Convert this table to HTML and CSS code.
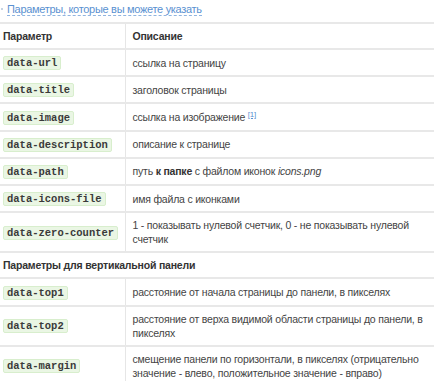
FILE: index.html
```html
<!DOCTYPE html>
<html lang="ru">
<head>
    <meta charset="UTF-8">
    <meta name="viewport" content="width=device-width, initial-scale=1.0">
    <title>Параметры</title>
    <link rel="stylesheet" href="styles.css">
</head>
<body>
    <div class="caption">
        <span class="mark"></span>
        <a href="#params">Параметры, которые вы можете указать</a>
    </div>

    <table class="params" id="params">
        <colgroup>
            <col class="col-name">
            <col>
        </colgroup>
        <tr class="head">
            <td>Параметр</td>
            <td>Описание</td>
        </tr>
        <tr>
            <td><code>data-url</code></td>
            <td>ссылка на страницу</td>
        </tr>
        <tr>
            <td><code>data-title</code></td>
            <td>заголовок страницы</td>
        </tr>
        <tr>
            <td><code>data-image</code></td>
            <td>ссылка на изображение <sup><a href="#note1">[1]</a></sup></td>
        </tr>
        <tr>
            <td><code>data-description</code></td>
            <td>описание к странице</td>
        </tr>
        <tr>
            <td><code>data-path</code></td>
            <td>путь <b>к папке</b> с файлом иконок <i>icons.png</i></td>
        </tr>
        <tr>
            <td><code>data-icons-file</code></td>
            <td>имя файла с иконками</td>
        </tr>
        <tr>
            <td><code>data-zero-counter</code></td>
            <td>1 - показывать нулевой счетчик, 0 - не показывать нулевой счетчик</td>
        </tr>
        <tr class="section">
            <td colspan="2">Параметры для вертикальной панели</td>
        </tr>
        <tr>
            <td><code>data-top1</code></td>
            <td>расстояние от начала страницы до панели, в пикселях</td>
        </tr>
        <tr>
            <td><code>data-top2</code></td>
            <td>расстояние от верха видимой области страницы до панели, в пикселях</td>
        </tr>
        <tr>
            <td><code>data-margin</code></td>
            <td>смещение панели по горизонтали, в пикселях (отрицательно значение - влево, положительное значение - вправо)</td>
        </tr>
    </table>
</body>
</html>
```

FILE: styles.css
```css
body {
    margin: 0;
    font-family: Arial, "Liberation Sans", sans-serif;
    font-size: 10.5px;
    letter-spacing: -0.2px;
    color: #444;
    background: #fff;
}
.caption {
    height: 22px;
    padding-left: 7px;
    line-height: 18px;
    position: relative;
}
.caption a {
    color: #5a91d1;
    font-size: 11px;
    letter-spacing: -0.3px;
    text-decoration: none;
    border-bottom: 1px dashed #8fb4e0;
}
.mark {
    position: absolute;
    left: 1px;
    top: 8px;
    width: 2px;
    height: 2px;
    background: #c5d3e3;
}
.params {
    width: 434px;
    border-collapse: collapse;
    table-layout: fixed;
}
.col-name {
    width: 125px;
}
.params td {
    padding: 5px 8px 5px 7px;
    line-height: 14px;
    border-top: 2px solid #e8e8e8;
    vertical-align: middle;
}
.params td:first-child {
    padding: 5px 4px 5px 3px;
    border-right: 1px solid #e6e6e6;
    white-space: nowrap;
}
.head td,
.section td {
    font-weight: bold;
    color: #333;
}
.section td:first-child {
    border-right: none;
}
code {
    display: inline-block;
    vertical-align: middle;
    font-family: "Liberation Mono", "Courier New", monospace;
    font-size: 10.5px;
    font-weight: bold;
    letter-spacing: 0;
    line-height: 12px;
    color: #3a3a3a;
    background: #eaf6e4;
    border: 1px solid #d8eecd;
    border-radius: 2px;
    padding: 0 3px;
}
b {
    color: #333;
}
sup {
    font-size: 8px;
    line-height: 0;
}
sup a {
    color: #5a91d1;
}
```
